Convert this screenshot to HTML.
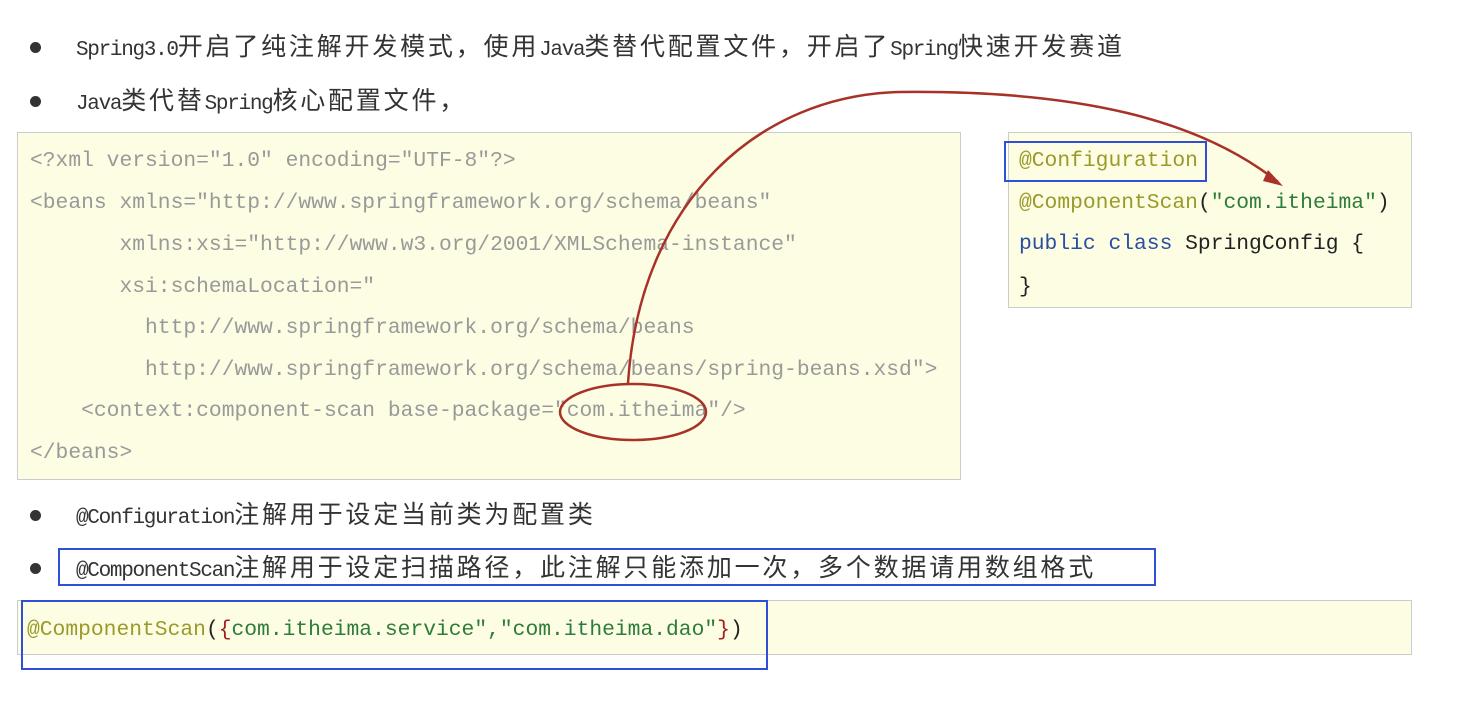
<!DOCTYPE html>
<html><head><meta charset="utf-8"><style>
body{margin:0;width:1468px;height:704px;background:#fff;position:relative;overflow:hidden;font-family:"Liberation Sans","Noto Sans CJK SC",sans-serif;}
.b{position:absolute;left:30px;font-size:25px;letter-spacing:2.8px;color:#333;white-space:nowrap;line-height:30px}
.b::before{content:"";position:absolute;left:0;top:10px;width:11px;height:11px;border-radius:50%;background:#333}
.b span.t{position:absolute;left:46px;top:0}
.m{font-family:"Liberation Mono",monospace;font-size:21px;letter-spacing:-1.3px}
.box{position:absolute;background:#fdfde3;border:1px solid #ccc}
.c{position:absolute;font-family:"Liberation Mono",monospace;font-size:21.3px;white-space:pre;line-height:24px}
.g{color:#999}
.y{color:#9a9a2a}
.gr{color:#2d7d3a}
.bl{color:#2a4fa0}
.k{color:#222}
.r{color:#a02020}
.blue{position:absolute;border:2px solid #2f4fd8}
</style></head><body>
<div class="b" style="top:32px"><span class="t"><span class="m">Spring3.0</span>开启了纯注解开发模式，使用<span class="m">Java</span>类替代配置文件，开启了<span class="m">Spring</span>快速开发赛道</span></div>
<div class="b" style="top:86px"><span class="t"><span class="m">Java</span>类代替<span class="m">Spring</span>核心配置文件，</span></div>
<div class="box" style="left:17px;top:132px;width:942px;height:346px"></div>
<div class="c g" style="left:30px;top:149px">&lt;?xml version="1.0" encoding="UTF-8"?&gt;</div>
<div class="c g" style="left:30px;top:191px">&lt;beans xmlns="http://www.springframework.org/schema/beans"</div>
<div class="c g" style="left:30px;top:233px">       xmlns:xsi="http://www.w3.org/2001/XMLSchema-instance"</div>
<div class="c g" style="left:30px;top:275px">       xsi:schemaLocation="</div>
<div class="c g" style="left:30px;top:316px">         http://www.springframework.org/schema/beans</div>
<div class="c g" style="left:30px;top:358px">         http://www.springframework.org/schema/beans/spring-beans.xsd"&gt;</div>
<div class="c g" style="left:30px;top:399px">    &lt;context:component-scan base-package="com.itheima"/&gt;</div>
<div class="c g" style="left:30px;top:441px">&lt;/beans&gt;</div>
<div class="box" style="left:1008px;top:132px;width:402px;height:174px"></div>
<div class="c y" style="left:1019px;top:149px">@Configuration</div>
<div class="c" style="left:1019px;top:191px"><span class="y">@ComponentScan</span><span class="k">(</span><span class="gr">"com.itheima"</span><span class="k">)</span></div>
<div class="c" style="left:1019px;top:232px"><span class="bl">public class</span> <span class="k">SpringConfig {</span></div>
<div class="c k" style="left:1019px;top:275px">}</div>
<div class="blue" style="left:1004px;top:141px;width:199px;height:37px"></div>
<div class="b" style="top:500px"><span class="t"><span class="m">@Configuration</span>注解用于设定当前类为配置类</span></div>
<div class="b" style="top:553px"><span class="t"><span class="m">@ComponentScan</span>注解用于设定扫描路径，此注解只能添加一次，多个数据请用数组格式</span></div>
<div class="blue" style="left:58px;top:548px;width:1094px;height:34px"></div>
<div class="box" style="left:17px;top:600px;width:1393px;height:53px"></div>
<div class="c" style="left:27px;top:618px"><span class="y">@ComponentScan</span><span class="k">(</span><span class="r">{</span><span class="gr">com.itheima.service","com.itheima.dao"</span><span class="r">}</span><span class="k">)</span></div>
<div class="blue" style="left:21px;top:600px;width:743px;height:66px"></div>
<svg style="position:absolute;left:0;top:0" width="1468" height="704">
<ellipse cx="633" cy="412" rx="73" ry="28" fill="none" stroke="#a83228" stroke-width="2.5"/>
<path d="M628 383 C640 200 760 95 900 92 C1080 90 1200 120 1278 182" fill="none" stroke="#a83228" stroke-width="2.5"/>
<path d="M1268 170 L1283 186 L1263 181 Z" fill="#a83228"/>
</svg>
</body></html>
